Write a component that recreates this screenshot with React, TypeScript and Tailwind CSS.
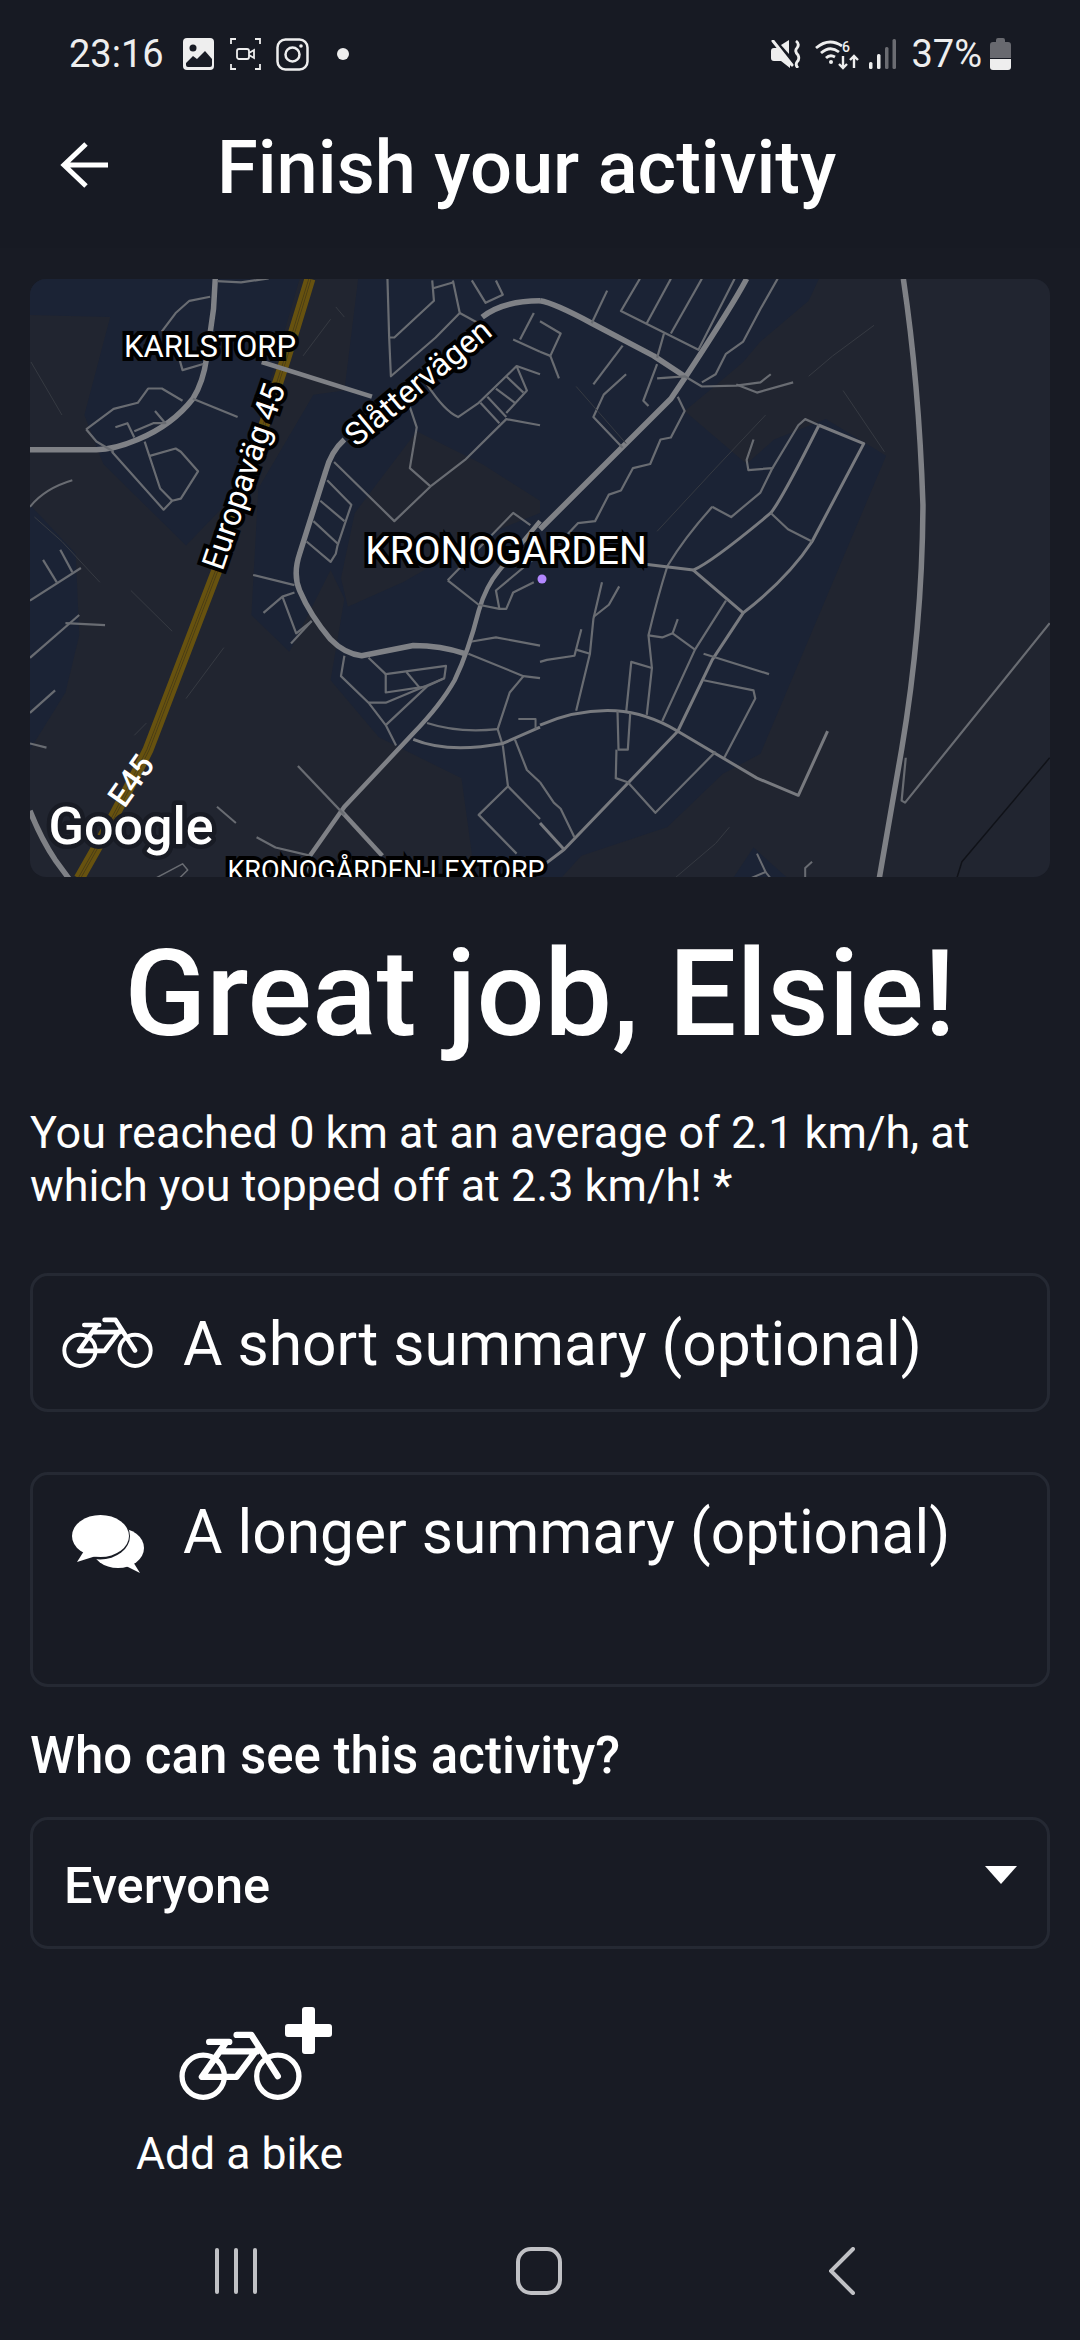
import React from 'react';

// paths use the zoomed map's coordinates, scaled down by the group transform
type Road = [string, number, string];

const MAIN = '#7f8186';
const MID = '#787a7f';
const MINOR = '#696c72';
const FAINT = '#363a42';

const leftRoads: Road[] = [
  ['M87 465 L280 465 Q330 465 400 440 Q500 405 560 340 Q590 300 600 240 L620 120 L625 46', 5.5, MAIN],
  ['M760 250 L1080 335', 4.5, MAIN],
  ['M1000 440 Q960 470 945 520 L870 720 Q850 770 870 810 Q900 870 960 930 Q1000 965 1050 970 L1200 945 Q1280 945 1350 965', 5.5, MAIN],
  ['M1400 140 Q1460 100 1568 100', 5.5, MAIN],
  ['M1568 640 L1450 760 Q1410 800 1390 860 Q1360 960 1320 1030 Q1280 1090 1200 1160 L1000 1340 L900 1460 L880 1516', 4.5, MAIN],
  ['M87 1350 Q120 1420 160 1470 L200 1516', 5.5, MAIN],
  ['M990 1350 L1110 1460', 4.5, MAIN],
  ['M630 52 L700 55 L780 45', 2.2, MINOR],
  ['M610 90 L550 100 L510 130 L470 175', 2.2, MINOR],
  ['M520 240 L530 270 L590 255', 2.2, MINOR],
  ['M250 415 L330 365 L400 350 L430 315 L470 315 L530 345', 2.2, MINOR],
  ['M250 415 L280 445 L330 470', 2.2, MINOR],
  ['M335 410 L370 400 L390 435', 2.2, MINOR],
  ['M390 420 L445 400 L480 400 L450 370', 2.2, MINOR],
  ['M560 340 L690 385', 2.2, MINOR],
  ['M325 470 L475 612 L500 590 L525 585 L575 518 L525 470 L510 462 L435 480', 2.2, MINOR],
  ['M420 445 L465 560 L500 590', 2.2, MINOR],
  ['M87 605 Q130 560 210 540', 2, MINOR],
  ['M87 835 L235 755', 2.2, MINOR],
  ['M125 735 L165 790', 2.2, MINOR],
  ['M175 710 L210 765', 2.2, MINOR],
  ['M87 975 L230 870', 2.2, MINOR],
  ['M190 890 L305 895', 2.2, MINOR],
  ['M87 1110 L160 1055', 2.2, MINOR],
  ['M87 1185 L135 1195', 2.2, MINOR],
  ['M100 630 L180 690 L290 790', 1, FAINT],
  ['M380 810 L500 910', 1, FAINT],
  ['M90 250 L180 380', 1, FAINT],
  ['M880 235 L960 145', 1, FAINT],
  ['M975 115 L1000 140', 1, FAINT],
  ['M540 1075 L650 950', 1, FAINT],
  ['M390 1165 L425 1135', 1, FAINT],
  ['M630 1340 L685 1380', 2, MINOR],
  ['M745 1415 L800 1440 L900 1460', 2.2, MINOR],
  ['M450 1516 L530 1480 L545 1495 L520 1516', 1.5, MINOR],
  ['M735 772 L855 797', 2.2, MINOR],
  ['M765 865 L820 825 L855 815', 2.2, MINOR],
  ['M820 825 L860 915 L905 885', 2.2, MINOR],
  ['M845 940 L905 885', 2.2, MINOR],
  ['M970 495 L1145 640 L1250 555 L1350 490 L1470 390 L1568 405', 2.2, MINOR],
  ['M950 540 L1020 600 L1000 650 L980 700 L975 720 L960 740 L890 690', 2.2, MINOR],
  ['M930 590 L1000 640', 2.2, MINOR],
  ['M910 640 L980 695', 2.2, MINOR],
  ['M1125 46 L1130 190 L1135 285 L1265 190 L1335 130 L1315 50', 2.2, MINOR],
  ['M1130 190 L1145 190 L1260 100 L1255 50', 2.2, MINOR],
  ['M1255 70 L1315 55', 2.2, MINOR],
  ['M1335 130 L1400 160', 2.2, MINOR],
  ['M1370 50 L1410 105 L1460 85 L1440 50', 2.2, MINOR],
  ['M1510 195 L1550 130', 2.2, MINOR],
  ['M1490 195 L1568 225', 2.2, MINOR],
  ['M1190 360 L1210 410 L1190 510 L1250 555', 2.2, MINOR],
  ['M1240 305 Q1290 370 1330 385 L1390 350 L1500 260 L1568 280', 2.2, MINOR],
  ['M1415 335 L1470 385', 2.2, MINOR],
  ['M1440 315 L1495 350', 2.2, MINOR],
  ['M1470 285 L1520 325', 2.2, MINOR],
  ['M1395 350 L1450 400', 2.2, MINOR],
  ['M1500 260 L1530 320 L1470 375', 2.2, MINOR],
  ['M1300 785 L1390 845 L1450 855 L1470 855 L1490 815 L1550 790', 2.2, MINOR],
  ['M1300 785 L1490 620 L1540 650', 2.2, MINOR],
  ['M1450 855 L1440 810 L1568 720', 2.2, MINOR],
  ['M1000 970 L990 1020 L1070 1085 L1120 1140 L1150 1190', 2.2, MINOR],
  ['M1070 975 L1120 1015 L1295 995 L1290 1025 L1120 1085 L1070 1085', 2.2, MINOR],
  ['M1120 1015 L1120 1060 L1240 1045', 2.2, MINOR],
  ['M1180 1010 L1220 1050', 2.2, MINOR],
  ['M1120 1140 L1240 1045 L1290 1025', 2.2, MINOR],
  ['M1370 935 L1440 925 L1568 945', 2.2, MINOR],
  ['M1360 965 L1520 1020 L1568 1025', 2.2, MINOR],
  ['M1520 1020 L1480 1060 L1445 1150 L1460 1190', 2.2, MINOR],
  ['M1200 1175 Q1300 1210 1460 1185 L1568 1145', 3, MID],
  ['M1240 1135 Q1330 1160 1445 1150', 2.2, MINOR],
  ['M1505 1125 L1555 1125 L1555 1150', 2, MINOR],
  ['M1495 1175 L1530 1250 L1568 1280', 2.2, MINOR],
  ['M1460 1190 L1475 1290 L1390 1360 L1500 1455', 2.2, MINOR],
  ['M1475 1290 L1568 1370', 2.2, MINOR],
  ['M865 1240 L1000 1360', 2.2, MINOR],
];

const rightRoads: Road[] = [
  ['M0 100 Q40 105 150 155 L330 235 L420 285', 5.5, MAIN],
  ['M600 46 Q560 110 420 290 L380 340 L0 660', 5.5, MAIN],
  ['M1055 46 Q1100 300 1112 600 Q1110 900 1050 1200 L985 1516', 5.5, MAIN],
  ['M400 1155 L70 1445 L0 1490', 3, MID],
  ['M0 150 L60 180 L30 235 L0 225', 2.2, MINOR],
  ['M30 235 L55 290', 2.2, MINOR],
  ['M195 75 L150 155', 2.2, MINOR],
  ['M290 46 L235 125 L460 220 L565 46', 2.2, MINOR],
  ['M310 155 L380 46', 2.2, MINOR],
  ['M380 180 L470 46', 2.2, MINOR],
  ['M360 180 L340 240', 2.2, MINOR],
  ['M240 210 L155 305', 2.2, MINOR],
  ['M340 255 L300 345 L315 358', 2.2, MINOR],
  ['M250 280 L185 330 L155 385 L240 460', 2.2, MINOR],
  ['M340 290 L420 285 L470 310 L570 308 L640 300 L670 280', 2.2, MINOR],
  ['M570 305 L630 325 L735 300', 2.2, MINOR],
  ['M400 335 L420 370 L380 435 L350 440 L320 500 L270 510 L235 565 L200 575 L160 640 L110 645 L60 690', 2.2, MINOR],
  ['M690 46 L640 120 L590 200 L540 230 L510 280 L470 300', 2.2, MINOR],
  ['M500 605 L555 630 L640 570 L675 510 L605 515 L600 490 L620 440', 2.2, MINOR],
  ['M500 605 Q420 680 370 750 Q340 830 315 920 L325 1000 L310 1115', 2.2, MINOR],
  ['M300 745 L445 760', 3, MID],
  ['M445 760 Q500 740 670 620 Q700 590 810 405 L940 450 L790 690 Q720 780 590 865 L445 760', 3, MID],
  ['M810 405 L770 390 L750 405 L675 510', 2.2, MINOR],
  ['M670 620 L720 660 L790 690', 2.2, MINOR],
  ['M540 835 L450 955 L355 1130', 2.2, MINOR],
  ['M590 865 L500 980 L400 1155', 3, MID],
  ['M475 965 L665 1015', 2.2, MINOR],
  ['M475 1030 L620 1055 L625 1075 L535 1220', 2.2, MINOR],
  ['M180 790 L155 880 L145 965 L105 1105', 2.2, MINOR],
  ['M230 800 L200 845 L155 875', 2.2, MINOR],
  ['M120 905 L100 970 L20 980 L0 985', 2.2, MINOR],
  ['M105 955 L145 965', 2.2, MINOR],
  ['M250 1110 L265 985 L325 1000', 2.2, MINOR],
  ['M400 880 L385 915 L355 925 L315 920', 2.2, MINOR],
  ['M385 915 L450 955', 2.2, MINOR],
  ['M0 1140 Q110 1100 220 1105 Q310 1110 400 1155 L630 1270 L750 1312 L835 1155', 3, MID],
  ['M225 1105 L228 1200 L255 1200 L262 1110', 2.2, MINOR],
  ['M222 1200 L220 1270 L255 1280 L335 1355 L510 1205', 2.2, MINOR],
  ['M0 1280 L40 1330 L60 1345 L100 1415', 2.2, MINOR],
  ['M0 1380 L70 1445', 3, MID],
  ['M630 1455 L655 1500 L610 1516', 2, MINOR],
  ['M655 1500 L670 1516', 2, MINOR],
  ['M770 1516 L770 1490 L790 1475', 2, MINOR],
  ['M1062 1220 L1050 1325 L1060 1330 L1480 890', 2.2, MINOR],
  ['M1210 1516 L1225 1475 L1480 1220', 1.5, '#101218'],
  ['M340 665 L510 510 L655 380', 1, FAINT],
  ['M390 1516 L510 1430 L550 1390', 1, FAINT],
  ['M780 285 L850 235 L970 160', 1, FAINT],
  ['M880 320 L1000 470', 1, FAINT],
  ['M105 310 L250 450', 1, FAINT],
];

const RoadGroup = ({ roads, x }: { roads: Road[]; x: number }) => (
  <g transform={`translate(${x} 260) scale(0.3444 0.408)`}>
    {roads.map(([d, w, c], i) => (
      <path key={i} d={d} stroke={c} strokeWidth={w} fill="none" vectorEffect="non-scaling-stroke" strokeLinejoin="round" />
    ))}
  </g>
);

const MapLabel = ({ x, y, size, rotate, children }: { x: number; y: number; size: number; rotate?: number; children: React.ReactNode }) => (
  <text
    x={x}
    y={y}
    fontSize={size}
    textAnchor="middle"
    fill="#fff"
    stroke="#000"
    strokeWidth={8}
    strokeLinejoin="miter"
    paintOrder="stroke"
    transform={rotate ? `rotate(${rotate} ${x} ${y})` : undefined}
  >
    {children}
  </text>
);

const E45_ROAD = 'M900 46 L830 240 L630 760 Q540 960 430 1200 Q330 1370 230 1516';

const MapView = () => (
  <svg viewBox="30 279 1020 598" className="block w-full h-full [font-family:Roboto,sans-serif]">
    <rect x="30" y="279" width="1020" height="598" fill="#212530" />
    <g transform="translate(0 260) scale(0.3444 0.408)" fill="#1b2335">
      <polygon points="87,46 870,46 790,280 700,560 540,700 300,500 245,380 320,140 87,135" />
      <polygon points="87,600 220,720 230,920 190,1060 87,1200" />
      <polygon points="1040,46 1568,46 1568,1516 1380,1516 1340,1270 1100,1170 960,1030 1000,830 960,760 840,960 730,870 750,560 910,330 1000,320" />
    </g>
    <g transform="translate(0 260) scale(0.3444 0.408)" fill="#212530">
      <polygon points="1210,420 1400,500 1568,590 1568,620 1420,670 1170,790 1010,850 990,780 1030,620" />
    </g>
    <g transform="translate(540 260) scale(0.3444 0.408)" fill="#1b2335">
      <polygon points="0,46 810,46 780,100 640,200 590,250 520,300 420,370 600,500 680,440 830,390 1005,480 640,1210 530,1260 370,1390 120,1460 60,1516 0,1516" />
      <polygon points="620,1440 720,1516 560,1516" />
    </g>
    <g transform="translate(0 260) scale(0.3444 0.408)">
      <path d={E45_ROAD} stroke="#67520f" strokeWidth={11} fill="none" vectorEffect="non-scaling-stroke" />
      <path d={E45_ROAD} stroke="#473b18" strokeWidth={3} fill="none" vectorEffect="non-scaling-stroke" />
      <path d={E45_ROAD} stroke="#67520f" strokeWidth={1.5} fill="none" vectorEffect="non-scaling-stroke" />
    </g>
    <RoadGroup roads={leftRoads} x={0} />
    <RoadGroup roads={rightRoads} x={540} />
    <circle cx="542" cy="579" r="4.5" fill="#b388ff" />
    <MapLabel x={210} y={357} size={31}>KARLSTORP</MapLabel>
    <MapLabel x={506} y={564} size={39}>KRONOGARDEN</MapLabel>
    <MapLabel x={254} y={480} size={32} rotate={-71}>Europaväg 45</MapLabel>
    <MapLabel x={425} y={391} size={32} rotate={-39.5}>Slåttervägen</MapLabel>
    <text x={140} y={787} fontSize={32} fontWeight={500} textAnchor="middle" fill="#fff" transform="rotate(-55 140 787)">E45</text>
    <text x={131} y={844} fontSize={52} fontWeight={500} textAnchor="middle" fill="#fff" stroke="#181b24" strokeWidth={9} strokeLinejoin="round" paintOrder="stroke">Google</text>
    <MapLabel x={386} y={880} size={27}>KRONOGÅRDEN-LEXTORP</MapLabel>
  </svg>
);

const BikeIcon = ({ className }: { className: string }) => (
  <svg viewBox="236 183 372 209" className={className} fill="none" stroke="#fff" strokeLinecap="round" strokeLinejoin="round">
    <circle cx="309" cy="320" r="64" strokeWidth="16" />
    <circle cx="535" cy="320" r="64" strokeWidth="16" />
    <path d="M327 216 H388 M375 222 L305 322 H410 L470 242 M365 245 H472 M410 195 H455 L535 320" strokeWidth="19" />
  </svg>
);

const ChatIcon = () => (
  <svg viewBox="0 0 72 58" className="w-[72px] h-[58px]">
    <ellipse cx="46" cy="33" rx="26" ry="20" fill="#fff" />
    <path d="M48 48 L68 58 L58 42 Z" fill="#fff" />
    <ellipse cx="28" cy="21" rx="30" ry="23.5" fill="#181b24" />
    <ellipse cx="28.5" cy="21" rx="28.5" ry="21" fill="#fff" />
    <path d="M12 36 L5 47 L24 41 Z" fill="#fff" />
  </svg>
);

const StatusLeftIcons = () => (
  <div className="flex items-center ml-[19px]">
    <svg viewBox="0 0 31 32" className="w-[31px] h-[32px]">
      <rect width="31" height="32" rx="4" fill="#eee" />
      <circle cx="10" cy="10" r="3.5" fill="#181b24" />
      <path d="M3 25 L10 18 L14 21 L22 13 L29 21 V27 Q29 29 27 29 H5 Q3 29 3 27 Z" fill="#181b24" />
    </svg>
    <svg viewBox="0 0 31 32" className="w-[31px] h-[32px] ml-[16px]" fill="none" stroke="#eee" strokeWidth="1.8">
      <path d="M1 6 V1 H6 M25 1 H30 V6 M1 26 V31 H6 M25 31 H30 V26" />
      <rect x="7" y="11" width="12" height="10" rx="2" />
      <path d="M19 15 L24 12 V20 L19 17" />
    </svg>
    <svg viewBox="0 0 33 33" className="w-[33px] h-[33px] ml-[15px]" fill="none" stroke="#eee" strokeWidth="2.5">
      <rect x="1.5" y="1.5" width="30" height="30" rx="8" />
      <circle cx="16.5" cy="16.5" r="7" />
      <circle cx="25" cy="8" r="1.8" fill="#eee" stroke="none" />
    </svg>
    <div className="w-3 h-3 rounded-full bg-[#eee] ml-[28px]" />
  </div>
);

const StatusRightIcons = () => (
  <div className="flex items-center">
    <svg viewBox="0 0 30 28" className="w-[30px] h-[28px]" fill="#eee">
      <path d="M0 11 Q0 8 3 8 H7 L19 22 V28 L10 21 H3 Q0 21 0 18 Z" />
      <path d="M10 5 L18 0 V14 Z" />
      <path d="M2 1 L21 25" stroke="#eee" strokeWidth="3" strokeLinecap="round" />
      <path d="M25 1 Q29 4 26 8 Q23 11 27 15 Q29 19 26 22 Q24 25 27 28" fill="none" stroke="#eee" strokeWidth="2.8" />
    </svg>
    <svg viewBox="0 0 44 32" className="w-[44px] h-[32px] ml-[14px]" fill="none" stroke="#eee" strokeWidth="2.8">
      <path d="M1 10 Q14 -1 27 8 M6 15 Q15 7 24 14 M11 20 Q15 16 20 19" />
      <circle cx="16" cy="24" r="2" fill="#eee" stroke="none" />
      <text x="27" y="14" fontSize="14" fontWeight="500" fill="#eee" stroke="none">6</text>
      <path d="M28 18 V30 M24 26 L28 30 L32 26 M39 30 V18 M35 22 L39 18 L43 22" strokeWidth="2.4" />
    </svg>
    <svg viewBox="0 0 27 30" className="w-[27px] h-[30px] ml-[10px]">
      <rect x="0" y="23" width="3.5" height="7" rx="1.5" fill="#eee" />
      <rect x="8" y="15" width="3.5" height="15" rx="1.5" fill="#eee" />
      <rect x="16" y="8" width="3.5" height="22" rx="1.5" fill="#6b6c72" />
      <rect x="23.5" y="0" width="3.5" height="30" rx="1.5" fill="#6b6c72" />
    </svg>
    <span className="ml-[15px] text-[38px] leading-none text-[#eee]">37%</span>
    <svg viewBox="0 0 21 32" className="w-[21px] h-[32px] ml-[8px]">
      <path d="M6 2 Q6 0 8 0 H13 Q15 0 15 2 V4 H18 Q21 4 21 7 V20 H0 V7 Q0 4 3 4 H6 Z" fill="#68696f" />
      <path d="M0 21 H21 V29 Q21 32 18 32 H3 Q0 32 0 29 Z" fill="#eee" />
    </svg>
  </div>
);

const App: React.FC = () => {
  return (
    <div className="w-[1080px] h-[2340px] overflow-hidden bg-[#181b24] text-white [font-family:Roboto,sans-serif]">
      {/* Status bar + app bar */}
      <div className="h-[248px] bg-[#171a23] flex flex-col">
        <div className="flex items-center justify-between pl-[69px] pr-[69px] pt-[35px]">
          <div className="flex items-center">
            <span className="text-[38px] leading-[38px] text-[#eee]">23:16</span>
            <StatusLeftIcons />
          </div>
          <StatusRightIcons />
        </div>
        <div className="flex items-center mt-[55px] pl-[60px]">
          <svg viewBox="0 0 48 46" className="w-[48px] h-[46px] mb-[6px]" fill="none" stroke="#fff" strokeWidth="5">
            <path d="M26 2 L4 23 L26 44 M4 23 H48" />
          </svg>
          <h1 className="ml-[109px] text-[74px] leading-[80px] font-medium whitespace-nowrap">Finish your activity</h1>
        </div>
      </div>

      {/* Map */}
      <div className="mx-[30px] mt-[31px] h-[598px] rounded-[16px] overflow-hidden">
        <MapView />
      </div>

      <h2 className="mt-[52px] text-center text-[120px] leading-[130px] font-medium whitespace-nowrap">Great job, Elsie!</h2>

      <p className="mx-[30px] mt-[47px] text-[45px] leading-[53px]">
        You reached 0 km at an average of 2.1 km/h, at which you topped off at 2.3 km/h! *
      </p>

      {/* Summary inputs */}
      <div className="mx-[30px] mt-[61px] h-[139px] rounded-[18px] border-[3px] border-[#252933] flex items-center pl-[29px]">
        <BikeIcon className="w-[91px] h-[51px]" />
        <span className="ml-[30px] mt-[5px] text-[60.5px] leading-[72px] whitespace-nowrap">A short summary (optional)</span>
      </div>
      <div className="mx-[30px] mt-[60px] h-[215px] rounded-[18px] border-[3px] border-[#252933] flex items-start pl-[39px] pt-[22px]">
        <div className="mt-[18px]">
          <ChatIcon />
        </div>
        <span className="ml-[39px] text-[60.5px] leading-[72px] whitespace-nowrap">A longer summary (optional)</span>
      </div>

      <div className="mx-[30px] mt-[41px] text-[51px] leading-[56px] font-medium">Who can see this activity?</div>

      {/* Visibility select */}
      <div className="mx-[30px] mt-[33px] h-[132px] rounded-[18px] border-[3px] border-[#252933] flex items-center justify-between pl-[31px] pr-[30px]">
        <span className="mt-[5px] text-[50.5px] leading-[56px] font-medium">Everyone</span>
        <div className="w-0 h-0 mb-[16px] border-l-[16px] border-r-[16px] border-t-[18px] border-l-transparent border-r-transparent border-t-white" />
      </div>

      {/* Add a bike */}
      <div className="ml-[137px] mt-[58px] w-[205px] flex flex-col items-center">
        <div className="relative w-[123px] h-[93px] self-start ml-[42px]">
          <BikeIcon className="absolute left-0 bottom-0 w-[123px] h-[69px]" />
          <svg viewBox="0 0 47 47" className="absolute left-[106px] top-0 w-[47px] h-[47px]" fill="#fff">
            <path d="M17 3 Q17 0 20 0 H27 Q30 0 30 3 V17 H44 Q47 17 47 20 V27 Q47 30 44 30 H30 V44 Q30 47 27 47 H20 Q17 47 17 44 V30 H3 Q0 30 0 27 V20 Q0 17 3 17 H17 Z" />
          </svg>
        </div>
        <span className="mt-[29px] text-[44.5px] leading-[50px] whitespace-nowrap">Add a bike</span>
      </div>

      {/* Nav bar */}
      <div className="mt-[68px] flex items-center pl-[215px] h-[48px]">
        <div className="flex gap-[15px]">
          <div className="w-1 h-[46px] rounded-full bg-[#c0c1c5]" />
          <div className="w-1 h-[46px] rounded-full bg-[#c0c1c5]" />
          <div className="w-1 h-[46px] rounded-full bg-[#c0c1c5]" />
        </div>
        <div className="ml-[259px] w-[46px] h-[48px] rounded-[15px] border-[4px] border-[#c0c1c5]" />
        <svg viewBox="0 0 26 48" className="ml-[267px] w-[26px] h-[48px]" fill="none" stroke="#c0c1c5" strokeWidth="4" strokeLinecap="round">
          <path d="M24 2 L2 24 L24 46" />
        </svg>
      </div>
    </div>
  );
};

export default App;
